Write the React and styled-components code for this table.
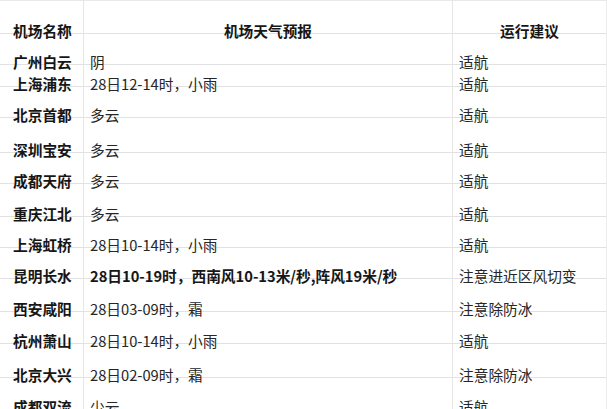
import React from 'react'
import styled, { createGlobalStyle } from 'styled-components'

const GlobalStyle = createGlobalStyle`
  html, body {
    margin: 0;
    padding: 0;
    background: #ffffff;
  }
  body {
    font-family: "Noto Sans CJK SC", "Noto Sans", sans-serif;
    color: #1c1c1c;
    overflow: hidden;
  }
`

const Table = styled.div`
  width: 606px;
  border-top: 1px solid #e8e8e8;
  border-right: 1px solid #ececec;
`

const Row = styled.div`
  display: grid;
  grid-template-columns: 84px 369px 1fr;
  height: ${props => props.$h}px;
  border-bottom: 1px solid #e2e2e2;
  box-sizing: border-box;
`

const Cell = styled.div`
  display: flex;
  align-items: flex-end;
  justify-content: ${props => (props.$center ? 'center' : 'flex-start')};
  padding-left: ${props => (props.$center ? 0 : props.$pad)}px;
  border-right: ${props => (props.$last ? 'none' : '1px solid #e6e6e6')};
  margin-bottom: -1px;
`

const Text = styled.span`
  font-size: 14.7px;
  line-height: 15px;
  margin-bottom: -4px;
  white-space: nowrap;
  font-weight: ${props => (props.$bold ? 700 : 400)};
  color: ${props => (props.$bold ? '#161616' : '#262626')};
`

const rows = [
  { name: '广州白云', weather: '阴', advice: '适航', h: 31 },
  { name: '上海浦东', weather: '28日12-14时，小雨', advice: '适航', h: 22 },
  { name: '北京首都', weather: '多云', advice: '适航', h: 31 },
  { name: '深圳宝安', weather: '多云', advice: '适航', h: 35 },
  { name: '成都天府', weather: '多云', advice: '适航', h: 31 },
  { name: '重庆江北', weather: '多云', advice: '适航', h: 33 },
  { name: '上海虹桥', weather: '28日10-14时，小雨', advice: '适航', h: 31 },
  { name: '昆明长水', weather: '28日10-19时，西南风10-13米/秒,阵风19米/秒', advice: '注意进近区风切变', h: 31, bold: true },
  { name: '西安咸阳', weather: '28日03-09时，霜', advice: '注意除防冰', h: 33 },
  { name: '杭州萧山', weather: '28日10-14时，小雨', advice: '适航', h: 32 },
  { name: '北京大兴', weather: '28日02-09时，霜', advice: '注意除防冰', h: 34 },
  { name: '成都双流', weather: '少云', advice: '适航', h: 32 },
]

export default function App() {
  return (
    <>
      <GlobalStyle />
      <Table>
        <Row $h={33}>
          <Cell $pad={13}><Text $bold>机场名称</Text></Cell>
          <Cell $center><Text $bold>机场天气预报</Text></Cell>
          <Cell $center $last><Text $bold>运行建议</Text></Cell>
        </Row>
        {rows.map((r, i) => (
          <Row key={i} $h={r.h}>
            <Cell $pad={13}><Text $bold>{r.name}</Text></Cell>
            <Cell $pad={6}><Text $bold={r.bold}>{r.weather}</Text></Cell>
            <Cell $pad={6} $last><Text>{r.advice}</Text></Cell>
          </Row>
        ))}
      </Table>
    </>
  )
}
